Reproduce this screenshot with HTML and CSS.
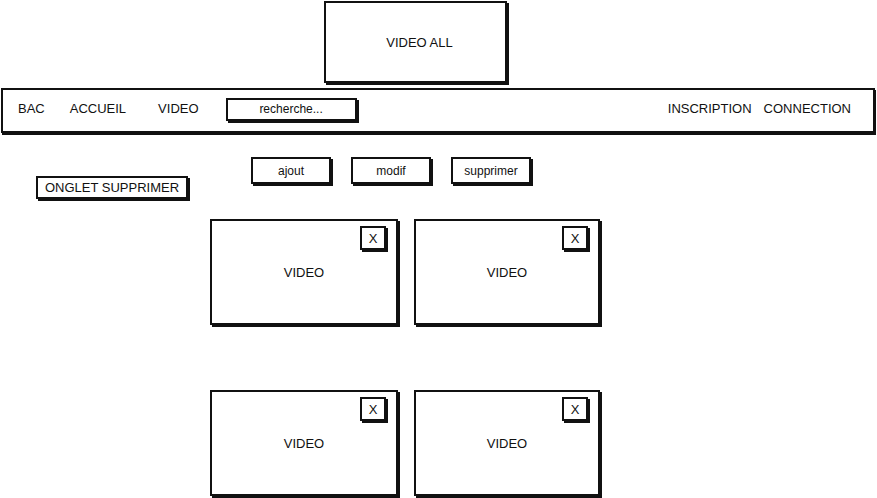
FILE: index.html
```html
<!DOCTYPE html>
<html lang="fr">
<head>
<meta charset="utf-8">
<title>Wireframe</title>
<link rel="stylesheet" href="styles.css">
</head>
<body>
<header class="top">
  <div class="box hero">VIDEO ALL</div>
</header>
<nav class="nav">
  <div class="nav-left">
    <span class="nav-link l-bac">BAC</span>
    <span class="nav-link l-accueil">ACCUEIL</span>
    <span class="nav-link l-video">VIDEO</span>
    <div class="box search">recherche...</div>
  </div>
  <div class="nav-right">
    <span class="nav-link l-insc">INSCRIPTION</span>
    <span class="nav-link">CONNECTION</span>
  </div>
</nav>
<section class="tools">
  <div class="box tab">ONGLET SUPPRIMER</div>
  <div class="actions">
    <div class="box btn">ajout</div>
    <div class="box btn">modif</div>
    <div class="box btn">supprimer</div>
  </div>
</section>
<main class="grid">
  <div class="box card">VIDEO<span class="box close">X</span></div>
  <div class="box card">VIDEO<span class="box close">X</span></div>
  <div class="box card">VIDEO<span class="box close">X</span></div>
  <div class="box card">VIDEO<span class="box close">X</span></div>
</main>
</body>
</html>
```
FILE: styles.css
```css
html, body {
  margin: 0;
  padding: 0;
  background: #fff;
}
body {
  font-family: "Liberation Sans", Arial, sans-serif;
  font-size: 13px;
  color: #111;
  width: 877px;
  height: 498px;
  overflow: hidden;
}
.box {
  box-sizing: border-box;
  border: 2px solid #111;
  background: #fff;
  box-shadow: 2px 2px 0 #111;
  display: flex;
  align-items: center;
  justify-content: center;
}
.top {
  display: flex;
  padding: 1px 0 0 324px;
}
.hero {
  width: 183px;
  height: 82px;
  font-size: 13px;
  padding-left: 8px;
}
.nav {
  box-sizing: border-box;
  margin: 5px 2px 0 1px;
  height: 45px;
  border: 2px solid #111;
  box-shadow: 1px 2px 0 #111;
  display: flex;
  align-items: center;
  justify-content: space-between;
  padding: 0 22px 0 15px;
}
.nav-left, .nav-right {
  display: flex;
  align-items: center;
}
.nav-link {
  font-size: 13px;
  line-height: 16px;
  margin-top: -4px;
}
.l-bac { margin-right: 25px; }
.l-accueil { margin-right: 32px; }
.l-video { margin-right: 27px; }
.l-insc { margin-right: 12px; }
.search {
  width: 131px;
  height: 23px;
  font-size: 12px;
  margin-top: -3px;
}
.tools {
  display: flex;
  align-items: flex-start;
  padding: 24px 0 0 36px;
}
.tab {
  width: 152px;
  height: 23px;
  margin-top: 19px;
  font-size: 13px;
}
.actions {
  display: flex;
  gap: 20px;
  margin-left: 63px;
}
.btn {
  width: 80px;
  height: 27px;
  font-size: 12px;
}
.grid {
  display: grid;
  grid-template-columns: 188px 186px;
  grid-auto-rows: 106px;
  column-gap: 16px;
  row-gap: 65px;
  padding: 20px 0 0 210px;
}
.card {
  position: relative;
  font-size: 13px;
}
.close {
  position: absolute;
  top: 5px;
  right: 10px;
  width: 26px;
  height: 24px;
  font-size: 13px;
}
```
